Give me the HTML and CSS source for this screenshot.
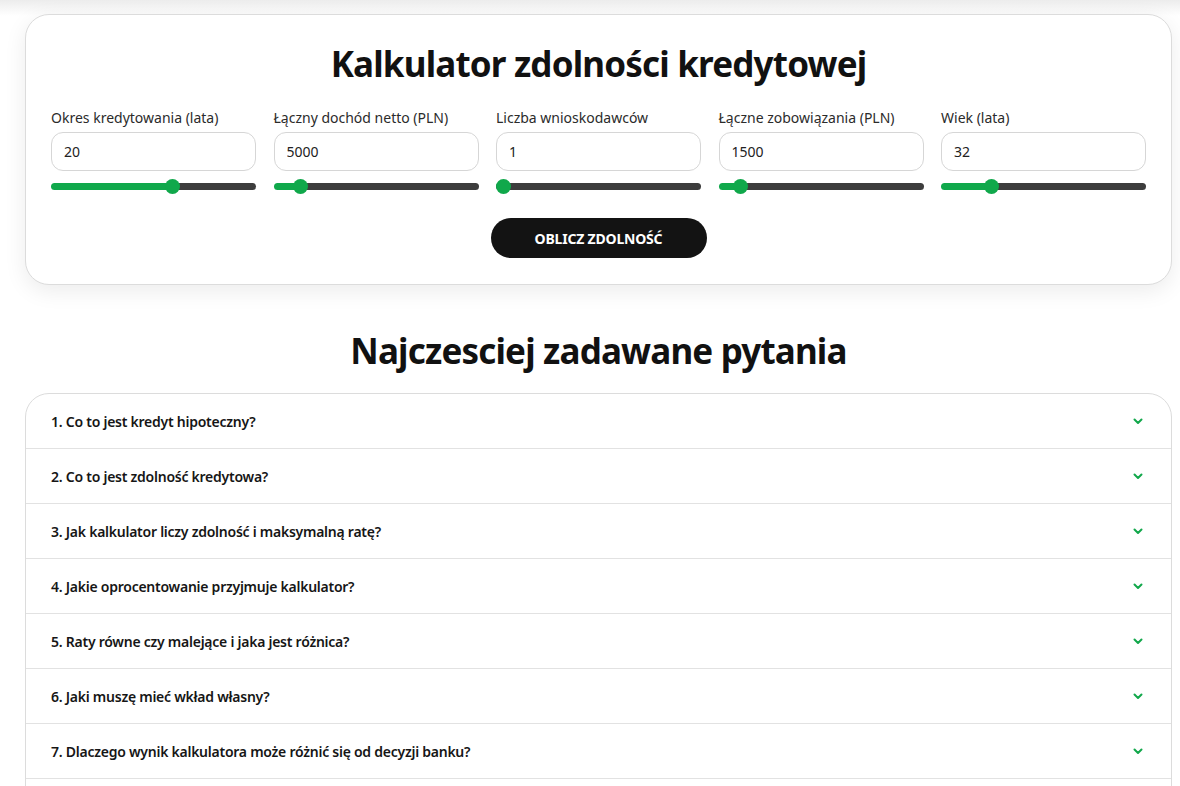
FILE: index.html
```html
<!DOCTYPE html>
<html lang="pl">
<head>
<meta charset="utf-8">
<title>Kalkulator zdolności kredytowej</title>
<link rel="stylesheet" href="styles.css">
</head>
<body>
<main class="page">
  <section class="calc">
    <h1 class="calc-title">Kalkulator zdolności kredytowej</h1>
    <div class="fields">
      <div class="field">
        <label class="field-label" for="okres">Okres kredytowania (lata)</label>
        <input class="field-input" id="okres" type="text" value="20">
        <input class="field-range" type="range" min="5" max="30" value="20" style="--p: 60%">
      </div>
      <div class="field">
        <label class="field-label" for="dochod">Łączny dochód netto (PLN)</label>
        <input class="field-input" id="dochod" type="text" value="5000">
        <input class="field-range" type="range" min="1000" max="41000" value="5000" style="--p: 10%">
      </div>
      <div class="field">
        <label class="field-label" for="osoby">Liczba wnioskodawców</label>
        <input class="field-input" id="osoby" type="text" value="1">
        <input class="field-range" type="range" min="1" max="4" value="1" style="--p: 0%">
      </div>
      <div class="field">
        <label class="field-label" for="zobow">Łączne zobowiązania (PLN)</label>
        <input class="field-input" id="zobow" type="text" value="1500">
        <input class="field-range" type="range" min="0" max="20000" value="1500" style="--p: 7.5%">
      </div>
      <div class="field">
        <label class="field-label" for="wiek">Wiek (lata)</label>
        <input class="field-input" id="wiek" type="text" value="32">
        <input class="field-range" type="range" min="18" max="80" value="32" style="--p: 22.6%">
      </div>
    </div>
    <div class="actions">
      <button class="btn-calc" type="button">Oblicz zdolność</button>
    </div>
  </section>

  <h2 class="faq-title">Najczesciej zadawane pytania</h2>
  <section class="faq">
    <div class="faq-item"><span>1. Co to jest kredyt hipoteczny?</span><svg class="chev" viewBox="0 0 12 8"><path d="M2.5 2.5l3.5 3.5 3.5-3.5"/></svg></div>
    <div class="faq-item"><span>2. Co to jest zdolność kredytowa?</span><svg class="chev" viewBox="0 0 12 8"><path d="M2.5 2.5l3.5 3.5 3.5-3.5"/></svg></div>
    <div class="faq-item"><span>3. Jak kalkulator liczy zdolność i maksymalną ratę?</span><svg class="chev" viewBox="0 0 12 8"><path d="M2.5 2.5l3.5 3.5 3.5-3.5"/></svg></div>
    <div class="faq-item"><span>4. Jakie oprocentowanie przyjmuje kalkulator?</span><svg class="chev" viewBox="0 0 12 8"><path d="M2.5 2.5l3.5 3.5 3.5-3.5"/></svg></div>
    <div class="faq-item"><span>5. Raty równe czy malejące i jaka jest różnica?</span><svg class="chev" viewBox="0 0 12 8"><path d="M2.5 2.5l3.5 3.5 3.5-3.5"/></svg></div>
    <div class="faq-item"><span>6. Jaki muszę mieć wkład własny?</span><svg class="chev" viewBox="0 0 12 8"><path d="M2.5 2.5l3.5 3.5 3.5-3.5"/></svg></div>
    <div class="faq-item"><span>7. Dlaczego wynik kalkulatora może różnić się od decyzji banku?</span><svg class="chev" viewBox="0 0 12 8"><path d="M2.5 2.5l3.5 3.5 3.5-3.5"/></svg></div>
    <div class="faq-item"><span>8. Czy kalkulator uwzględnia koszty dodatkowe?</span><svg class="chev" viewBox="0 0 12 8"><path d="M2.5 2.5l3.5 3.5 3.5-3.5"/></svg></div>
  </section>
</main>
</body>
</html>
```

FILE: styles.css
```css
* {
  box-sizing: border-box;
}

html, body {
  margin: 0;
  background: #fff;
}

body {
  font-family: "Noto Sans", "Open Sans", Arial, sans-serif;
  color: #161616;
  background: linear-gradient(to bottom, #ececec 0, #f6f6f6 8px, #fff 16px) no-repeat;
}

.page {
  padding: 14px 8px 0 25px;
}

/* calculator card */
.calc {
  background: #fff;
  border: 1px solid #dcdcdc;
  border-radius: 24px;
  padding: 27px 25px 26px;
  box-shadow: 0 6px 22px rgba(0, 0, 0, 0.08);
}

.calc-title {
  margin: 0;
  text-align: center;
  font-size: 35px;
  line-height: 43px;
  font-weight: 700;
  color: #111;
  letter-spacing: -0.82px;
}

.fields {
  display: grid;
  grid-template-columns: repeat(5, minmax(0, 1fr));
  column-gap: 17.5px;
  margin-top: 23px;
}

.field {
  display: flex;
  flex-direction: column;
  min-width: 0;
}

.field-label {
  font-size: 14px;
  line-height: 20px;
  color: #2b2b2b;
  margin-bottom: 4px;
  white-space: nowrap;
}

.field-input {
  width: 100%;
  height: 39px;
  border: 1px solid #d6d6d6;
  border-radius: 12px;
  padding: 0 12px;
  font: inherit;
  font-size: 14px;
  color: #222;
  background: #fff;
  outline: none;
}

.field-range {
  -webkit-appearance: none;
  appearance: none;
  width: 100%;
  height: 16px;
  margin: 7px 0 0;
  background: transparent;
}

.field-range::-webkit-slider-runnable-track {
  height: 7px;
  border-radius: 4px;
  background: linear-gradient(to right, #10a84b var(--p), #3d3d3d var(--p));
}

.field-range::-webkit-slider-thumb {
  -webkit-appearance: none;
  width: 15px;
  height: 15px;
  border-radius: 50%;
  background: #10a84b;
  margin-top: -4px;
  border: none;
}

.actions {
  display: flex;
  justify-content: center;
  margin-top: 24px;
}

.btn-calc {
  width: 216px;
  height: 40px;
  border: none;
  border-radius: 20px;
  background: #131313;
  color: #fff;
  font: inherit;
  font-size: 14px;
  font-weight: 700;
  text-transform: uppercase;
  letter-spacing: -0.2px;
}

/* FAQ */
.faq-title {
  margin: 44px 0 21px;
  text-align: center;
  font-size: 35px;
  line-height: 43px;
  font-weight: 700;
  color: #111;
  letter-spacing: -0.82px;
}

.faq {
  border: 1px solid #dcdcdc;
  border-radius: 24px 24px 0 0;
  background: #fff;
  overflow: hidden;
}

.faq-item {
  display: flex;
  align-items: center;
  justify-content: space-between;
  height: 55px;
  padding: 0 27px 0 25px;
  border-bottom: 1px solid #e2e2e2;
  font-size: 14px;
  font-weight: 600;
  letter-spacing: -0.25px;
  color: #161616;
}

.chev {
  width: 12px;
  height: 8px;
  fill: none;
  stroke: #12a84b;
  stroke-width: 2;
  stroke-linecap: round;
  stroke-linejoin: round;
}
```
